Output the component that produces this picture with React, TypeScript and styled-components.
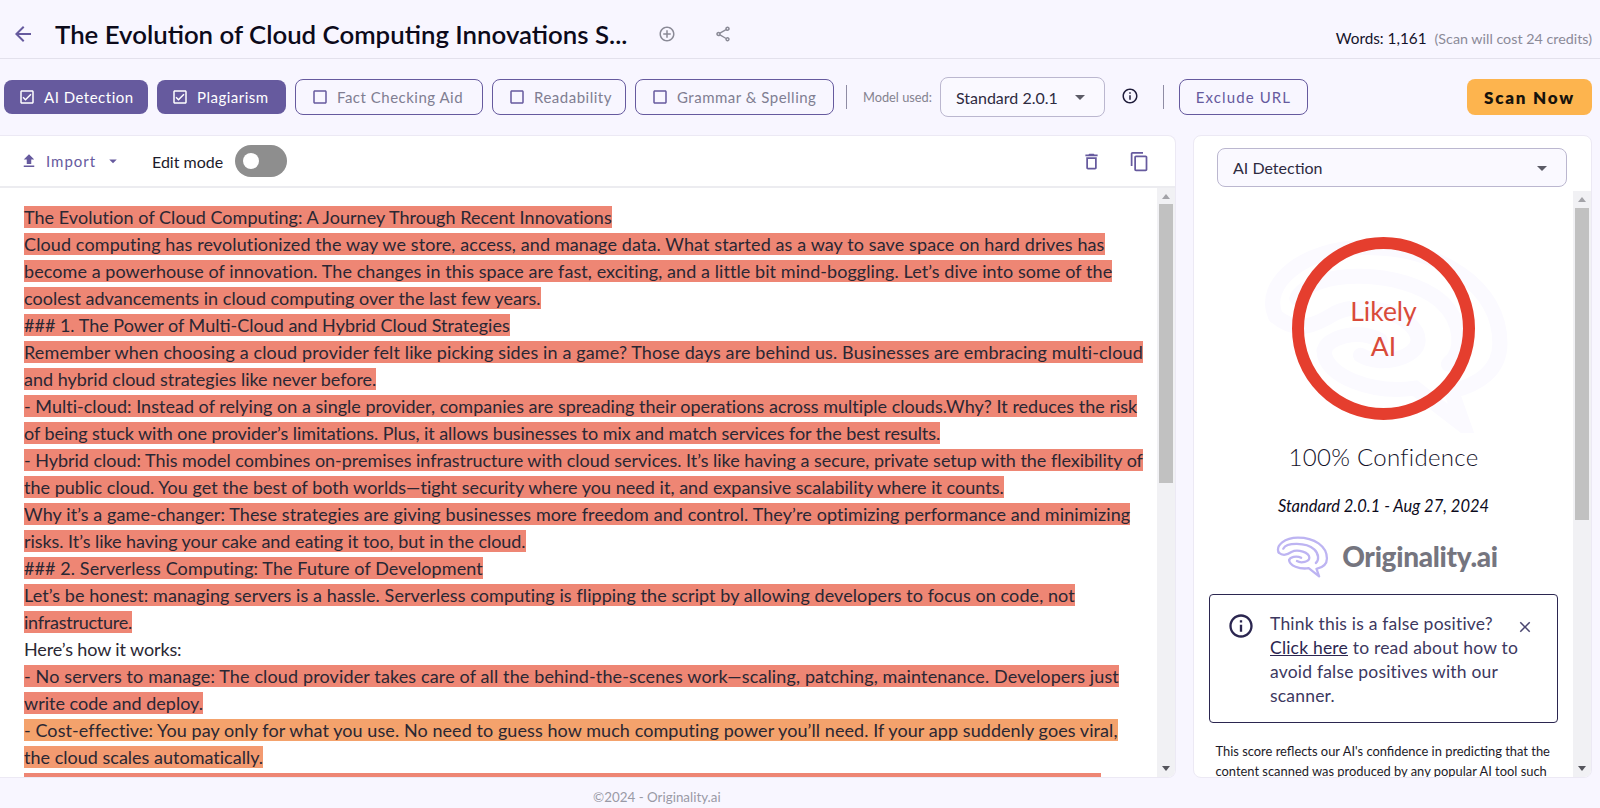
import styled, { createGlobalStyle } from "styled-components";
import {
  MdArrowBack,
  MdAddCircleOutline,
  MdOutlineShare,
  MdOutlineCheckBox,
  MdCheckBoxOutlineBlank,
  MdOutlineInfo,
  MdFileUpload,
  MdArrowDropDown,
  MdOutlineDelete,
  MdOutlineContentCopy,
  MdClose,
} from "react-icons/md";

const GlobalStyle = createGlobalStyle`
  html, body {
    margin: 0;
    height: 100%;
    overflow: hidden;
    background: #f8f6ff;
    font-family: "Lato", "Liberation Sans", sans-serif;
  }
`;

type Tone = "high" | "warm" | "warmer" | "none";

// fit: letter-spacing per line, the substitute font runs a little narrower than the original
const LINES: { text: string; tone: Tone; fit: number }[] = [
  { text: "The Evolution of Cloud Computing: A Journey Through Recent Innovations", tone: "high", fit: 0.04 },
  { text: "Cloud computing has revolutionized the way we store, access, and manage data. What started as a way to save space on hard drives has", tone: "high", fit: 0.11 },
  { text: "become a powerhouse of innovation. The changes in this space are fast, exciting, and a little bit mind-boggling. Let’s dive into some of the", tone: "high", fit: 0.07 },
  { text: "coolest advancements in cloud computing over the last few years.", tone: "high", fit: 0.01 },
  { text: "### 1. The Power of Multi-Cloud and Hybrid Cloud Strategies", tone: "high", fit: 0 },
  { text: "Remember when choosing a cloud provider felt like picking sides in a game? Those days are behind us. Businesses are embracing multi-cloud", tone: "high", fit: 0.125 },
  { text: "and hybrid cloud strategies like never before.", tone: "high", fit: -0.01 },
  { text: "- Multi-cloud: Instead of relying on a single provider, companies are spreading their operations across multiple clouds.Why? It reduces the risk", tone: "high", fit: 0.02 },
  { text: "of being stuck with one provider’s limitations. Plus, it allows businesses to mix and match services for the best results.", tone: "high", fit: -0.05 },
  { text: "- Hybrid cloud: This model combines on-premises infrastructure with cloud services. It’s like having a secure, private setup with the flexibility of", tone: "high", fit: -0.03 },
  { text: "the public cloud. You get the best of both worlds—tight security where you need it, and expansive scalability where it counts.", tone: "high", fit: 0.02 },
  { text: "Why it’s a game-changer: These strategies are giving businesses more freedom and control. They’re optimizing performance and minimizing", tone: "high", fit: 0.1 },
  { text: "risks. It’s like having your cake and eating it too, but in the cloud.", tone: "high", fit: -0.05 },
  { text: "### 2. Serverless Computing: The Future of Development", tone: "high", fit: 0.09 },
  { text: "Let’s be honest: managing servers is a hassle. Serverless computing is flipping the script by allowing developers to focus on code, not", tone: "high", fit: 0.08 },
  { text: "infrastructure.", tone: "high", fit: -0.25 },
  { text: "Here’s how it works:", tone: "none", fit: -0.12 },
  { text: "- No servers to manage: The cloud provider takes care of all the behind-the-scenes work—scaling, patching, maintenance. Developers just", tone: "high", fit: 0.13 },
  { text: "write code and deploy.", tone: "high", fit: 0.01 },
  { text: "- Cost-effective: You pay only for what you use. No need to guess how much computing power you’ll need. If your app suddenly goes viral,", tone: "warm", fit: 0.07 },
  { text: "the cloud scales automatically.", tone: "warmer", fit: 0.01 },
];

const TONES: Record<Tone, string> = {
  high: "#ee8674",
  warm: "#f4a26c",
  warmer: "#f39a70",
  none: "transparent",
};

const Page = styled.div`
  display: flex;
  flex-direction: column;
  height: 808px;
  width: 1600px;
`;

const Header = styled.header`
  display: flex;
  align-items: center;
  height: 59px;
  border-bottom: 1px solid #e3e1ec;
  padding: 9px 8px 0 11px;
  box-sizing: border-box;
`;

const BackIcon = styled(MdArrowBack)`
  font-size: 24px;
  color: #665a9e;
  margin-right: 20px;
`;

const Title = styled.h1`
  margin: 0;
  font-size: 25.8px;
  font-weight: 600;
  color: #0c0a1a;
  width: 603px;
  white-space: nowrap;
`;

const HeaderIcon = styled.span`
  display: flex;
  font-size: 18px;
  color: #8a8a96;
  margin-right: 38px;
`;

const Words = styled.div`
  margin-left: auto;
  margin-top: 8px;
  font-size: 15.3px;
  color: #14122a;
  display: flex;
  gap: 8px;
  align-items: baseline;
`;

const Cost = styled.span`
  font-size: 14.3px;
  color: #8b8a98;
`;

const Toolbar = styled.div`
  display: flex;
  align-items: center;
  height: 76px;
  padding: 0 8px 0 4px;
`;

const OptionButton = styled.button<{ $on?: boolean; $w: number }>`
  display: flex;
  align-items: center;
  gap: 8px;
  box-sizing: border-box;
  width: ${(p) => p.$w}px;
  height: ${(p) => (p.$on ? 34 : 36)}px;
  margin-right: 9px;
  padding: 0 0 0 ${(p) => (p.$on ? 14 : 15)}px;
  border-radius: 8px;
  border: ${(p) => (p.$on ? "none" : "1px solid #665a9e")};
  background: ${(p) => (p.$on ? "#665a9e" : "transparent")};
  color: ${(p) => (p.$on ? "#fff" : "#807e92")};
  font-family: inherit;
  font-size: 15px;
  letter-spacing: 0.5px;
  white-space: nowrap;

  svg {
    font-size: 18px;
    flex: none;
    color: ${(p) => (p.$on ? "#fff" : "#665a9e")};
  }
`;

const VDivider = styled.span<{ $ml: number; $mr: number }>`
  width: 1px;
  height: 24px;
  background: #8f8ca4;
  margin: 0 ${(p) => p.$mr}px 0 ${(p) => p.$ml}px;
`;

const ModelLabel = styled.span`
  font-size: 12.8px;
  color: #85838f;
  margin-right: 8px;
  white-space: nowrap;
`;

const Select = styled.div<{ $w: number; $h: number }>`
  display: flex;
  align-items: center;
  justify-content: space-between;
  box-sizing: border-box;
  width: ${(p) => p.$w}px;
  height: ${(p) => p.$h}px;
  border: 1px solid #bbb7cf;
  border-radius: 8px;
  padding: 0 12px 0 15px;
  font-size: 16px;
  color: #2e2b3f;
  background: #faf9ff;

  svg {
    font-size: 24px;
    color: #5b5b66;
    flex: none;
  }
`;

const InfoIcon = styled(MdOutlineInfo)`
  font-size: 18px;
  color: #1f1c3a;
  margin: 0 24px 2px 16px;
`;

const ExcludeButton = styled.button`
  box-sizing: border-box;
  width: 129px;
  height: 36px;
  border: 1px solid #665a9e;
  border-radius: 8px;
  background: transparent;
  color: #665a9e;
  font-family: inherit;
  font-size: 15px;
  letter-spacing: 1.1px;
`;

const ScanButton = styled.button`
  margin-left: auto;
  width: 125px;
  height: 36px;
  border: none;
  border-radius: 8px;
  background: #fdb44e;
  color: #17130c;
  font-family: inherit;
  font-size: 17px;
  font-weight: 800;
  letter-spacing: 1.8px;
`;

const Main = styled.main`
  display: flex;
  justify-content: space-between;
  height: 643px;
  padding-right: 8px;
`;

const EditorPanel = styled.section`
  width: 1176px;
  display: flex;
  flex-direction: column;
  background: #fff;
  border: 1px solid #ece9f4;
  border-left: none;
  border-radius: 0 8px 8px 0;
  box-sizing: border-box;
  overflow: hidden;
`;

const EditorBar = styled.div`
  display: flex;
  align-items: center;
  height: 52px;
  flex: none;
  box-sizing: border-box;
  border-bottom: 2px solid #ececf0;
  padding: 0 25px 0 20px;
`;

const ImportLabel = styled.span`
  display: flex;
  align-items: center;
  color: #665a9e;
  font-size: 15px;
  letter-spacing: 1px;
  width: 132px;

  svg:first-child {
    font-size: 18px;
    margin-right: 8px;
  }

  svg:last-child {
    font-size: 18px;
    margin-left: 8px;
  }
`;

const EditLabel = styled.span`
  font-size: 16px;
  color: #1d1b2b;
  margin-right: 12px;
`;

const Toggle = styled.span`
  display: flex;
  align-items: center;
  width: 52px;
  height: 32px;
  border-radius: 16px;
  background: #8e8e8e;
  padding-left: 8px;
  box-sizing: border-box;
`;

const Knob = styled.span`
  width: 16px;
  height: 16px;
  border-radius: 50%;
  background: #fff;
`;

const BarIcon = styled.span<{ $auto?: boolean }>`
  display: flex;
  font-size: 21px;
  color: #665a9e;
  margin-left: ${(p) => (p.$auto ? "auto" : "27px")};
`;

const ScrollBody = styled.div`
  flex: 1;
  display: flex;
  min-height: 0;
`;

const TextArea = styled.div`
  flex: 1;
  overflow: hidden;
  padding: 16px 0 0 24px;
  font-size: 18px;
  line-height: 27px;
  color: #2a2733;
`;

const Line = styled.div<{ $fit: number }>`
  white-space: nowrap;
  letter-spacing: ${(p) => p.$fit}px;
`;

const Mark = styled.span<{ $tone: Tone }>`
  background: ${(p) => TONES[p.$tone]};
`;

const ClippedMark = styled.div`
  width: 1077px;
  height: 22px;
  margin-top: 2px;
  background: #ee8674;
`;

const Rail = styled.div<{ $pad: number }>`
  flex: none;
  width: 18px;
  display: flex;
  flex-direction: column;
  align-items: center;
  background: #f1f1f4;
  padding-top: ${(p) => p.$pad}px;
  box-sizing: border-box;
`;

const ArrowUp = styled.span`
  width: 0;
  height: 0;
  border: 4px solid transparent;
  border-top: none;
  border-bottom: 5px solid #a3a3a8;
`;

const ArrowDown = styled.span`
  width: 0;
  height: 0;
  margin-top: auto;
  margin-bottom: 6px;
  border: 4px solid transparent;
  border-bottom: none;
  border-top: 5px solid #55555c;
`;

const Thumb = styled.span<{ $h: number; $mt: number }>`
  width: 14px;
  height: ${(p) => p.$h}px;
  margin-top: ${(p) => p.$mt}px;
  background: #c1c1c1;
`;

const ResultPanel = styled.aside`
  width: 399px;
  display: flex;
  flex-direction: column;
  background: #fff;
  border: 1px solid #ece9f4;
  border-radius: 8px;
  box-sizing: border-box;
  overflow: hidden;
`;

const ResultHead = styled.div`
  flex: none;
  height: 55px;
  padding: 12px 25px 0 23px;
  box-sizing: border-box;
`;

const ResultContent = styled.div`
  flex: 1;
  overflow: hidden;
  display: flex;
  flex-direction: column;
  align-items: center;
`;

const RingWrap = styled.div`
  position: relative;
  flex: none;
  width: 250px;
  height: 202px;
  margin-top: 40px;
  display: flex;
  justify-content: center;
  padding-top: 6px;
  box-sizing: border-box;
`;

const Watermark = styled.svg`
  position: absolute;
  inset: 0;
  width: 100%;
  height: 100%;
`;

const Ring = styled.div`
  position: relative;
  width: 183px;
  height: 183px;
  box-sizing: border-box;
  border: 12px solid #e53e2e;
  border-radius: 50%;
  display: flex;
  align-items: center;
  justify-content: center;
  text-align: center;
  color: #d94a3a;
  font-size: 26.5px;
  font-weight: 400;
  line-height: 35px;
`;

const Confidence = styled.div`
  margin-top: 9px;
  font-size: 24px;
  line-height: 30px;
  font-weight: 300;
  letter-spacing: 0.3px;
  color: #14122a;
`;

const ModelDate = styled.div`
  margin-top: 24px;
  font-size: 16.5px;
  line-height: 20px;
  font-style: italic;
  color: #0d0b1c;
`;

const Logo = styled.div`
  display: flex;
  align-items: center;
  gap: 13px;
  height: 44px;
  margin: 18px 0 0 6px;
  color: #75757f;
  font-size: 28px;
  font-weight: 900;
  letter-spacing: -0.3px;
`;

const Alert = styled.div`
  position: relative;
  flex: none;
  width: 349px;
  height: 129px;
  margin-top: 16px;
  box-sizing: border-box;
  border: 1px solid #2b2650;
  border-radius: 4px;
  padding: 17px 0 0 60px;
  font-size: 17.5px;
  line-height: 24px;
  letter-spacing: 0.2px;
  color: #3c3860;
  white-space: nowrap;
`;

const AlertIcon = styled(MdOutlineInfo)`
  position: absolute;
  left: 17px;
  top: 17px;
  font-size: 28px;
  color: #2b2650;
`;

const AlertClose = styled(MdClose)`
  position: absolute;
  right: 23px;
  top: 23px;
  font-size: 18px;
  color: #4a4670;
`;

const AlertLink = styled.span`
  text-decoration: underline;
  color: #2b2650;
`;

const Note = styled.p`
  flex: none;
  width: 336px;
  margin: 18px 0 0;
  font-size: 12.9px;
  line-height: 20px;
  color: #1c1a28;
`;

const Footer = styled.footer`
  flex: 1;
  padding: 11px 0 0 593px;
  font-size: 13.4px;
  color: #9a9aa6;
`;

function BrainPaths() {
  return (
    <>
      <path d="M36 72C26 50 55 26 95 26C145 26 184 52 184 90C184 108 170 118 152 122L160 145L128 120C100 124 68 112 68 95" />
      <path d="M36 72C50 84 62 78 75 70C95 60 130 72 130 88C130 100 105 106 92 98" />
      <path d="M50 60C60 40 120 40 145 62C160 76 160 96 150 104" />
      <path d="M68 95C70 86 90 80 105 88" />
    </>
  );
}

export default function App() {
  return (
    <Page>
      <GlobalStyle />
      <Header>
        <BackIcon />
        <Title>The Evolution of Cloud Computing Innovations S...</Title>
        <HeaderIcon>
          <MdAddCircleOutline />
        </HeaderIcon>
        <HeaderIcon>
          <MdOutlineShare />
        </HeaderIcon>
        <Words>
          Words: 1,161 <Cost>(Scan will cost 24 credits)</Cost>
        </Words>
      </Header>

      <Toolbar>
        <OptionButton $on $w={144}>
          <MdOutlineCheckBox /> AI Detection
        </OptionButton>
        <OptionButton $on $w={129}>
          <MdOutlineCheckBox /> Plagiarism
        </OptionButton>
        <OptionButton $w={188}>
          <MdCheckBoxOutlineBlank /> Fact Checking Aid
        </OptionButton>
        <OptionButton $w={134}>
          <MdCheckBoxOutlineBlank /> Readability
        </OptionButton>
        <OptionButton $w={199}>
          <MdCheckBoxOutlineBlank /> Grammar &amp; Spelling
        </OptionButton>
        <VDivider $ml={3} $mr={16} />
        <ModelLabel>Model used:</ModelLabel>
        <Select $w={165} $h={40}>
          Standard 2.0.1
          <MdArrowDropDown />
        </Select>
        <InfoIcon />
        <VDivider $ml={0} $mr={15} />
        <ExcludeButton>Exclude URL</ExcludeButton>
        <ScanButton>Scan Now</ScanButton>
      </Toolbar>

      <Main>
        <EditorPanel>
          <EditorBar>
            <ImportLabel>
              <MdFileUpload /> Import <MdArrowDropDown />
            </ImportLabel>
            <EditLabel>Edit mode</EditLabel>
            <Toggle>
              <Knob />
            </Toggle>
            <BarIcon $auto>
              <MdOutlineDelete />
            </BarIcon>
            <BarIcon>
              <MdOutlineContentCopy />
            </BarIcon>
          </EditorBar>
          <ScrollBody>
            <TextArea>
              {LINES.map((line) => (
                <Line key={line.text} $fit={line.fit}>
                  <Mark $tone={line.tone}>{line.text}</Mark>
                </Line>
              ))}
              <ClippedMark />
            </TextArea>
            <Rail $pad={6}>
              <ArrowUp />
              <Thumb $h={279} $mt={5} />
              <ArrowDown />
            </Rail>
          </ScrollBody>
        </EditorPanel>

        <ResultPanel>
          <ResultHead>
            <Select $w={350} $h={39}>
              AI Detection
              <MdArrowDropDown />
            </Select>
          </ResultHead>
          <ScrollBody>
            <ResultContent>
              <RingWrap>
                <Watermark viewBox="25 15 165 135" fill="none" stroke="#fbfaff" strokeWidth="10" strokeLinecap="round" preserveAspectRatio="none">
                  <BrainPaths />
                </Watermark>
                <Ring>
                  Likely
                  <br />
                  AI
                </Ring>
              </RingWrap>
              <Confidence>100% Confidence</Confidence>
              <ModelDate>Standard 2.0.1 - Aug 27, 2024</ModelDate>
              <Logo>
                <svg width="54" height="44" viewBox="25 15 165 135" fill="none" stroke="#bdb4f2" strokeWidth="7" strokeLinecap="round" strokeLinejoin="round">
                  <BrainPaths />
                </svg>
                Originality.ai
              </Logo>
              <Alert>
                <AlertIcon />
                <AlertClose />
                Think this is a false positive?
                <br />
                <AlertLink>Click here</AlertLink> to read about how to
                <br />
                avoid false positives with our
                <br />
                scanner.
              </Alert>
              <Note>
                This score reflects our AI's confidence in predicting that the content scanned was produced by any popular AI tool such
              </Note>
            </ResultContent>
            <Rail $pad={6}>
              <ArrowUp />
              <Thumb $h={312} $mt={6} />
              <ArrowDown />
            </Rail>
          </ScrollBody>
        </ResultPanel>
      </Main>

      <Footer>©2024 - Originality.ai</Footer>
    </Page>
  );
}
